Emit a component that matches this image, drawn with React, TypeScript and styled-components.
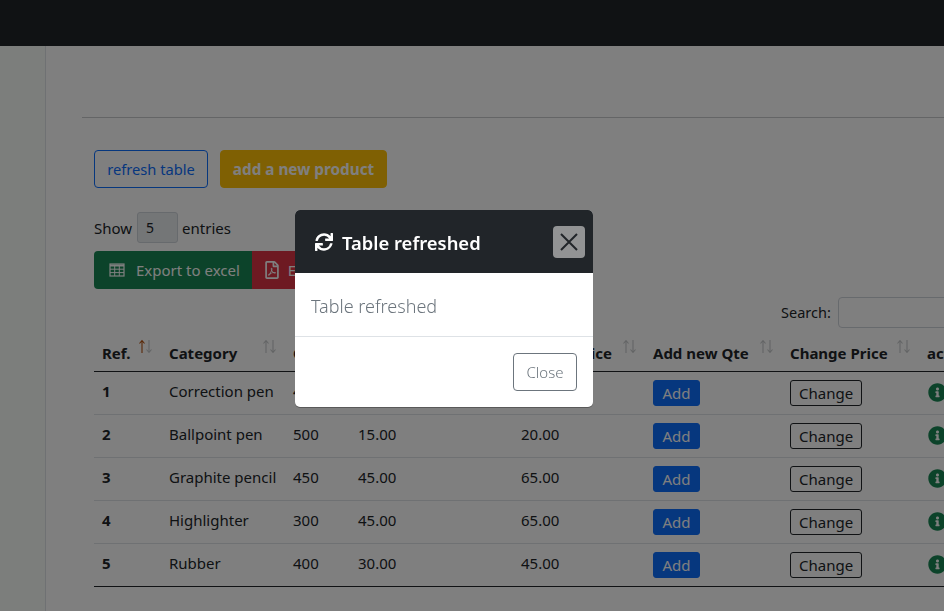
import * as React from "react";
import styled, { createGlobalStyle } from "styled-components";
import { FaSync, FaRegFilePdf, FaInfoCircle } from "react-icons/fa";

const rows = [
  { ref: 1, category: "Correction pen", qty: 400, buy: "15.00", sell: "20.00" },
  { ref: 2, category: "Ballpoint pen", qty: 500, buy: "15.00", sell: "20.00" },
  { ref: 3, category: "Graphite pencil", qty: 450, buy: "45.00", sell: "65.00" },
  { ref: 4, category: "Highlighter", qty: 300, buy: "45.00", sell: "65.00" },
  { ref: 5, category: "Rubber", qty: 400, buy: "30.00", sell: "45.00" },
];

const headers = [
  { label: "Ref.", width: 67 },
  { label: "Category", width: 124 },
  { label: "Qte", width: 65 },
  { label: "Purchase Price", width: 163 },
  { label: "Selling Price", width: 132 },
  { label: "Add new Qte", width: 137 },
  { label: "Change Price", width: 137 },
  { label: "action", width: 100 },
];

const App = () => {
  return (
    <>
      <GlobalStyle />
      <TopBar />
      <Layout>
        <SideBar />
        <Main>
          <Rule />
          <Content>
            <ActionRow>
              <RefreshButton>refresh table</RefreshButton>
              <NewButton>add a new product</NewButton>
            </ActionRow>
            <LengthRow>
              Show <LengthBox>5</LengthBox> entries
            </LengthRow>
            <ExportRow>
              <ExportButton color="#198754">
                <svg width="16" height="14" viewBox="0 0 16 14" fill="none" stroke="currentColor">
                  <rect x="1" y="1" width="14" height="12" strokeWidth="1.2" />
                  <path d="M1 2.5 H15" strokeWidth="2" />
                  <path d="M1 6.2 H15 M1 9.6 H15 M5.7 3 V13 M10.3 3 V13" strokeWidth="1" />
                </svg>
                Export to excel
              </ExportButton>
              <ExportButton color="#dc3545">
                <PdfIcon size={18} />
                Export to pdf
              </ExportButton>
            </ExportRow>
            <SearchRow>
              <SearchLabel>Search:</SearchLabel> <SearchBox />
            </SearchRow>
            <Table>
              <colgroup>
                {headers.map((h) => (
                  <col key={h.label} style={{ width: h.width }} />
                ))}
              </colgroup>
              <thead>
                <tr>
                  {headers.map((h, i) => (
                    <HeadCell key={h.label}>
                      {h.label}
                      {i < 7 && (
                        <SortIcons width="15" height="15" viewBox="0 0 15 15" fill="none" strokeWidth="1.1">
                          <path d="M4 14 V1.5 M1.5 4.5 L4 1.5 L6.5 4.5" stroke={i === 0 ? "#b4500f" : "#c6c8ca"} />
                          <path d="M11 1 V13.5 M8.5 10.5 L11 13.5 L13.5 10.5" stroke="#c6c8ca" />
                        </SortIcons>
                      )}
                    </HeadCell>
                  ))}
                </tr>
              </thead>
              <tbody>
                {rows.map((r) => (
                  <tr key={r.ref}>
                    <RefCell>{r.ref}</RefCell>
                    <TextCell>{r.category}</TextCell>
                    <TextCell>{r.qty}</TextCell>
                    <TextCell>{r.buy}</TextCell>
                    <TextCell>{r.sell}</TextCell>
                    <Cell>
                      <AddButton>Add</AddButton>
                    </Cell>
                    <Cell>
                      <ChangeButton>Change</ChangeButton>
                    </Cell>
                    <IconCell>
                      <InfoIcon>
                        <FaInfoCircle size={19} />
                      </InfoIcon>
                    </IconCell>
                  </tr>
                ))}
              </tbody>
            </Table>
          </Content>
        </Main>
      </Layout>
      <Backdrop />
      <Modal>
        <ModalHeader>
          <ModalTitle>
            <FaSync size={18} />
            Table refreshed
          </ModalTitle>
          <CloseX aria-label="close">
            <svg width="18" height="18" viewBox="0 0 18 18">
              <path d="M1 1 L17 17 M17 1 L1 17" stroke="#212529" strokeWidth="2" fill="none" />
            </svg>
          </CloseX>
        </ModalHeader>
        <ModalBody>Table refreshed</ModalBody>
        <ModalFooter>
          <CloseButton>Close</CloseButton>
        </ModalFooter>
      </Modal>
    </>
  );
};
export default App;

const GlobalStyle = createGlobalStyle`
  html, body {
    margin: 0;
    height: 100%;
    overflow: hidden;
    background: #fff;
  }
  body {
    font-family: "Noto Sans", "Open Sans", sans-serif;
    font-size: 15px;
    color: #212529;
  }
`;

const TopBar = styled.div`
  height: 46px;
  background: #212529;
`;

const Layout = styled.div`
  display: flex;
  height: 565px;
`;

const SideBar = styled.div`
  width: 45px;
  flex: none;
  background: #f8fcf8;
  border-right: 1px solid #dee2e6;
`;

const Main = styled.div`
  flex: 1;
  min-width: 0;
  padding: 71px 0 0 36px;
`;

const Rule = styled.div`
  height: 1px;
  background: #c8cacc;
`;

const Content = styled.div`
  padding: 32px 0 0 12px;
  width: 960px;
`;

const ActionRow = styled.div`
  display: flex;
  gap: 12px;
`;

const BaseButton = styled.button`
  font-family: inherit;
  font-size: 15px;
  height: 38px;
  border-radius: 4px;
  padding: 0;
  box-sizing: border-box;
`;

const RefreshButton = styled(BaseButton)`
  width: 114px;
  font-size: 14.7px;
  background: transparent;
  border: 1px solid #0d6efd;
  color: #0d6efd;
`;

const NewButton = styled(BaseButton)`
  width: 167px;
  font-size: 15.3px;
  background: #ffc107;
  border: 1px solid #ffc107;
  color: #fff;
  font-weight: 700;
`;

const LengthRow = styled.div`
  display: flex;
  align-items: center;
  gap: 5px;
  height: 31px;
  margin-top: 24px;
`;

const LengthBox = styled.div`
  width: 41px;
  height: 31px;
  margin-right: -1px;
  box-sizing: border-box;
  border: 1px solid #ced4da;
  border-radius: 3px;
  background: #e9ecef;
  padding-left: 8px;
  font-size: 14px;
  line-height: 29px;
`;

const ExportRow = styled.div`
  display: flex;
  margin-top: 8px;
`;

const ExportButton = styled.div<{ color: string }>`
  display: flex;
  align-items: center;
  gap: 11px;
  height: 38px;
  padding: 0 12px 0 15px;
  color: #fff;
  background: ${(props) => props.color};
  &:first-child {
    border-radius: 4px 0 0 4px;
  }
`;

const PdfIcon = styled(FaRegFilePdf)`
  margin: 0 -4px;
`;

const SearchRow = styled.div`
  display: flex;
  align-items: center;
  gap: 7px;
  height: 31px;
  margin: 8px 0 7px 687px;
  font-size: 14.5px;
`;

const SearchLabel = styled.span`
  padding-bottom: 2px;
`;

const SearchBox = styled.div`
  width: 160px;
  height: 31px;
  box-sizing: border-box;
  border: 1px solid #ced4da;
  border-radius: 4px;
  background: #fff;
`;

const Table = styled.table`
  table-layout: fixed;
  width: 925px;
  border-collapse: collapse;
  border-bottom: 1px solid #212529;
`;

const HeadCell = styled.th`
  position: relative;
  height: 35px;
  padding: 8px;
  box-sizing: border-box;
  text-align: left;
  font-size: 15px;
  font-weight: 700;
  white-space: nowrap;
  border-bottom: 1px solid #212529;
`;

const SortIcons = styled.svg`
  position: absolute;
  right: 8px;
  top: 4px;
`;

const Cell = styled.td`
  height: 43px;
  padding: 0 8px;
  box-sizing: border-box;
  font-size: 15px;
  white-space: nowrap;
  border-bottom: 1px solid #dee2e6;
  tr:last-child > & {
    border-bottom: 0;
  }
`;

const TextCell = styled(Cell)`
  padding-bottom: 4px;
`;

const RefCell = styled(TextCell)`
  font-weight: 700;
`;

const IconCell = styled(Cell)`
  padding: 2px 0 0 9px;
`;

const SmallButton = styled.button`
  font-family: inherit;
  font-size: 15px;
  height: 26px;
  padding: 0 8px;
  border-radius: 3px;
  box-sizing: border-box;
  vertical-align: middle;
`;

const AddButton = styled(SmallButton)`
  width: 47px;
  background: #0d6efd;
  border: 1px solid #0d6efd;
  color: #fff;
`;

const ChangeButton = styled(SmallButton)`
  width: 72px;
  background: transparent;
  border: 1px solid #212529;
  color: #212529;
`;

const InfoIcon = styled.span`
  display: inline-flex;
  color: #198754;
`;

const Backdrop = styled.div`
  position: fixed;
  inset: 0;
  background: rgba(0, 0, 0, 0.5);
`;

const Modal = styled.div`
  position: fixed;
  left: 295px;
  top: 210px;
  width: 298px;
  height: 197px;
  display: flex;
  flex-direction: column;
  background: #fff;
  border-radius: 5px;
  overflow: hidden;
  box-shadow: 0 1px 0 rgba(0, 0, 0, 0.3);
`;

const ModalHeader = styled.div`
  display: flex;
  align-items: center;
  justify-content: space-between;
  height: 63px;
  flex: none;
  padding: 0 8px 0 20px;
  background: #212529;
`;

const ModalTitle = styled.div`
  display: flex;
  align-items: center;
  gap: 9px;
  padding-top: 1px;
  color: #fff;
  font-size: 18.4px;
  font-weight: 600;
`;

const CloseX = styled.button`
  width: 32px;
  height: 32px;
  padding: 0;
  display: flex;
  align-items: center;
  justify-content: center;
  background: #929394;
  border: 0;
  border-radius: 4px;
`;

const ModalBody = styled.div`
  height: 64px;
  flex: none;
  box-sizing: border-box;
  padding: 2px 16px 0;
  display: flex;
  align-items: center;
  font-size: 18px;
  font-weight: 300;
  color: #6c757d;
  border-bottom: 1px solid #dee2e6;
`;

const ModalFooter = styled.div`
  flex: 1;
  display: flex;
  justify-content: flex-end;
  align-items: center;
  padding: 0 16px;
`;

const CloseButton = styled(BaseButton)`
  width: 64px;
  background: #fff;
  border: 1px solid #6c757d;
  color: #6c757d;
  font-weight: 300;
`;
